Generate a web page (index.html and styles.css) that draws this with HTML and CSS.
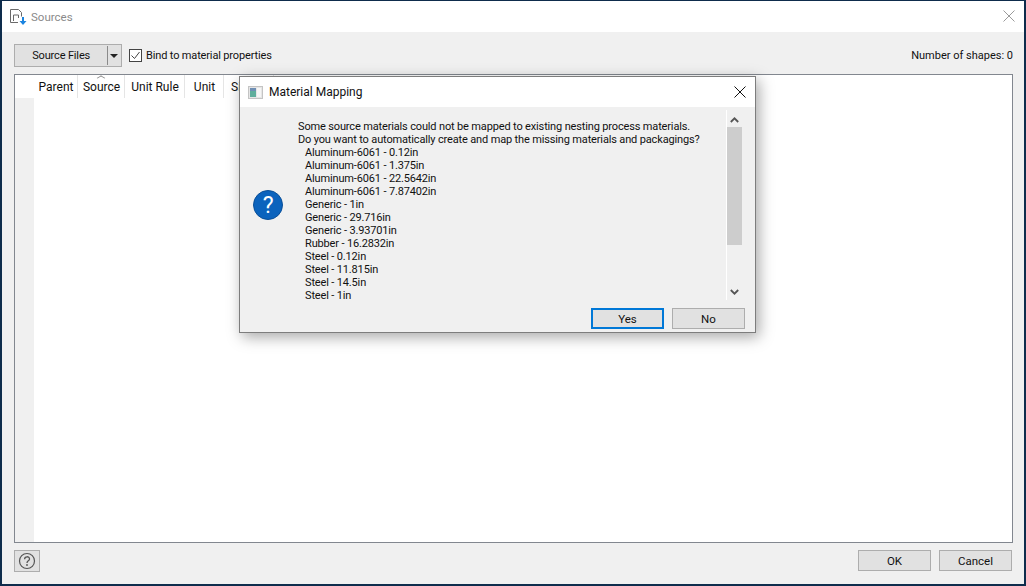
FILE: index.html
```html
<!DOCTYPE html>
<html>
<head>
<meta charset="utf-8">
<title>Sources</title>
<link rel="stylesheet" href="styles.css">
</head>
<body>
<div class="window">
  <header class="titlebar">
    <svg class="app-icon" width="18" height="18" viewBox="0 0 18 18">
      <path d="M9 14.5H1.5v-13h8l3 3v4" fill="none" stroke="#6a6a6a" stroke-width="1"/>
      <path d="M4.5 13v-6h5v3" fill="none" stroke="#6a6a6a" stroke-width="1"/>
      <path d="M13 9h2v4h2.5L14 17l-3.5-4H13z" fill="#1b84e0"/>
    </svg>
    <span class="title">Sources</span>
    <svg class="win-close" width="12" height="12" viewBox="0 0 12 12"><path d="M.5.5l11 11M11.5.5l-11 11" stroke="#9a9a9a" stroke-width="1" fill="none"/></svg>
  </header>
  <div class="toolbar">
    <div class="split">
      <span class="split-main">Source Files</span>
      <span class="split-arrow"></span>
    </div>
    <label class="check">
      <svg class="checkbox" width="13" height="13" viewBox="0 0 13 13"><rect x=".5" y=".5" width="12" height="12" fill="#fff" stroke="#444"/><path d="M2.5 6.5l3 3 5-6.5" fill="none" stroke="#444" stroke-width="1"/></svg>
      Bind to material properties
    </label>
    <span class="count">Number of shapes: 0</span>
  </div>
  <div class="table">
    <div class="gutter"><div class="gutter-head"></div></div>
    <div class="thead">
      <span class="th c1">Parent</span>
      <span class="th c2"><i class="sort"></i>Source</span>
      <span class="th c3">Unit Rule</span>
      <span class="th c4">Unit</span>
      <span class="th c5">Size</span>
    </div>
  </div>
  <footer class="footer">
    <button class="help">
      <svg width="18" height="18" viewBox="0 0 18 18"><circle cx="9" cy="9" r="7.5" fill="none" stroke="#555" stroke-width="1.2"/><path d="M6.6 7.2c0-3.2 4.9-3.2 4.9-.2 0 1.9-2.5 1.8-2.5 3.9" fill="none" stroke="#555" stroke-width="1.3"/><circle cx="9" cy="13" r=".9" fill="#555"/></svg>
    </button>
    <div class="footer-btns">
      <button class="btn">OK</button>
      <button class="btn">Cancel</button>
    </div>
  </footer>
</div>

<div class="dialog">
  <div class="dlg-title">
    <svg width="15" height="13" viewBox="0 0 15 13"><rect x=".5" y=".5" width="14" height="12" fill="#e6e6e6" stroke="#c4c4c4"/><rect x="2" y="2" width="6" height="9" fill="#5fae9c"/><rect x="2" y="2" width="6" height="3" fill="#6f8fb4"/><rect x="9" y="2" width="4" height="9" fill="#f6f6f6"/></svg>
    <span>Material Mapping</span>
    <svg class="dlg-close" width="12" height="12" viewBox="0 0 12 12"><path d="M.5.5l11 11M11.5.5l-11 11" stroke="#111" stroke-width="1" fill="none"/></svg>
  </div>
  <div class="dlg-body">
    <svg class="q-icon" width="30" height="30" viewBox="0 0 30 30"><circle cx="15" cy="15" r="14.5" fill="#0b63bd" stroke="#0a4f98"/><text x="15" y="23" class="q-mark" text-anchor="middle">?</text></svg>
    <div class="msg">
      <p>Some source materials could not be mapped to existing nesting process materials.</p>
      <p>Do you want to automatically create and map the missing materials and packagings?</p>
      <ul class="list">
        <li>Aluminum-6061 - 0.12in</li>
        <li>Aluminum-6061 - 1.375in</li>
        <li>Aluminum-6061 - 22.5642in</li>
        <li>Aluminum-6061 - 7.87402in</li>
        <li>Generic - 1in</li>
        <li>Generic - 29.716in</li>
        <li>Generic - 3.93701in</li>
        <li>Rubber - 16.2832in</li>
        <li>Steel - 0.12in</li>
        <li>Steel - 11.815in</li>
        <li>Steel - 14.5in</li>
        <li>Steel - 1in</li>
      </ul>
    </div>
    <div class="scroll">
      <svg width="9" height="6" viewBox="0 0 9 6"><path d="M.8 5L4.5 1.3 8.2 5" fill="none" stroke="#555" stroke-width="1.8"/></svg>
      <div class="track"><div class="thumb"></div></div>
      <svg width="9" height="6" viewBox="0 0 9 6"><path d="M.8 1L4.5 4.7 8.2 1" fill="none" stroke="#555" stroke-width="1.8"/></svg>
    </div>
  </div>
  <div class="dlg-btns">
    <button class="btn btn-default">Yes</button>
    <button class="btn">No</button>
  </div>
</div>
</body>
</html>
```
FILE: styles.css
```css
* { box-sizing: border-box; }
html, body { margin: 0; height: 100%; overflow: hidden; }
body { font-family: Roboto, "Open Sans", sans-serif; font-size: 11px; letter-spacing: -0.15px; color: #111; background: #f0f0f0; }
.window {
  width: 1026px; height: 586px; border: 1px solid #0e2c4c; border-bottom-width: 2px;
  border-left-width: 2px; border-right-width: 2px;
  display: flex; flex-direction: column; background: #f0f0f0;
}
.titlebar { height: 31px; background: #fff; display: flex; align-items: center; padding: 0 10px 0 7px; flex: none; }
.app-icon { margin-right: 4px; }
.title { color: #8a8a8a; font-size: 11.5px; letter-spacing: 0; }
.win-close { margin-left: auto; margin-right: -1px; margin-top: -1px; }
.toolbar { height: 42px; padding: 11px 11px 7px 12px; display: flex; align-items: center; flex: none; line-height: 15px; }
.split { width: 108px; height: 23px; background: #e1e1e1; border: 1px solid #adadad; display: flex; align-items: center; }
.split-main { width: 94px; text-align: center; padding-top: 1px; }
.split-arrow { width: 14px; height: 19px; border-left: 1px solid #8a8a8a; position: relative; }
.split-arrow::after { content: ""; position: absolute; left: 2px; top: 8px; border: 4px solid transparent; border-top: 4px solid #222; border-bottom: 0; }
.check { margin-left: 7px; display: flex; align-items: center; gap: 4px; padding-top: 1px; }
.checkbox { margin-top: -1px; }
.count { margin-left: auto; letter-spacing: 0; padding-top: 1px; }
.table { height: 469px; margin: 0 11px 0 12px; border: 1px solid #82878f; background: #fff; flex: none; display: flex; }
.gutter { width: 19px; background: #f0f0f0; flex: none; }
.gutter-head { height: 23px; background: #fff; }
.thead { display: flex; height: 23px; flex: 1; }
.th { display: flex; align-items: center; justify-content: center; height: 23px; padding: 1px 0 0 1px; border-right: 1px solid #e5e5e5; font-size: 12px; letter-spacing: 0; position: relative; }
.c1 { width: 44px; }
.c2 { width: 47px; }
.c3 { width: 60px; }
.c4 { width: 39px; }
.c5 { width: 50px; justify-content: flex-start; padding-left: 7px; }
.sort { position: absolute; top: 0; left: 20px; width: 6px; height: 6px; border-top: 1px solid #888; border-left: 1px solid #888; transform: scaleY(.6) rotate(45deg); }
.footer { flex: 1; display: flex; align-items: flex-start; justify-content: space-between; padding: 7px 12px 0 12px; }
.help { width: 26px; height: 22px; padding: 0; background: #e1e1e1; border: 1px solid #adadad; display: flex; align-items: center; justify-content: center; }
.footer-btns { display: flex; gap: 8px; }
.btn { width: 73px; height: 21px; background: #e1e1e1; border: 1px solid #adadad; font: inherit; font-size: 11.5px; letter-spacing: 0; color: #111; padding: 0; }
.btn-default { border: 2px solid #0078d7; }
.dialog {
  position: absolute; left: 239px; top: 76px; width: 517px; height: 257px;
  border: 1px solid #7d7d7d; background: #f0f0f0; box-shadow: 3px 4px 14px rgba(0,0,0,.35);
  display: flex; flex-direction: column;
}
.dlg-title { height: 30px; background: #fff; display: flex; align-items: center; gap: 6px; padding: 0 9px 0 8px; font-size: 12px; letter-spacing: 0; flex: none; }
.dlg-close { margin-left: auto; }
.dlg-body { height: 201px; display: flex; flex: none; position: relative; }
.q-icon { position: absolute; left: 13px; top: 83px; }
.q-mark { font: 400 23px Roboto, sans-serif; fill: #fff; }
.msg { margin-left: 58px; width: 428px; padding-top: 13px; line-height: 13px; }
.msg p { margin: 0; white-space: nowrap; }
.list { list-style: none; margin: 0; padding: 0 0 0 7px; }
.scroll { width: 16px; height: 190px; margin-top: 3px; padding: 7px 0 5px; border-left: 1px solid #fff; display: flex; flex-direction: column; align-items: center; gap: 4px; }
.track { flex: 1; width: 15px; }
.thumb { height: 118px; background: #cdcdcd; }
.dlg-btns { flex: 1; display: flex; justify-content: flex-end; gap: 8px; padding: 0 10px 0 0; }
```
